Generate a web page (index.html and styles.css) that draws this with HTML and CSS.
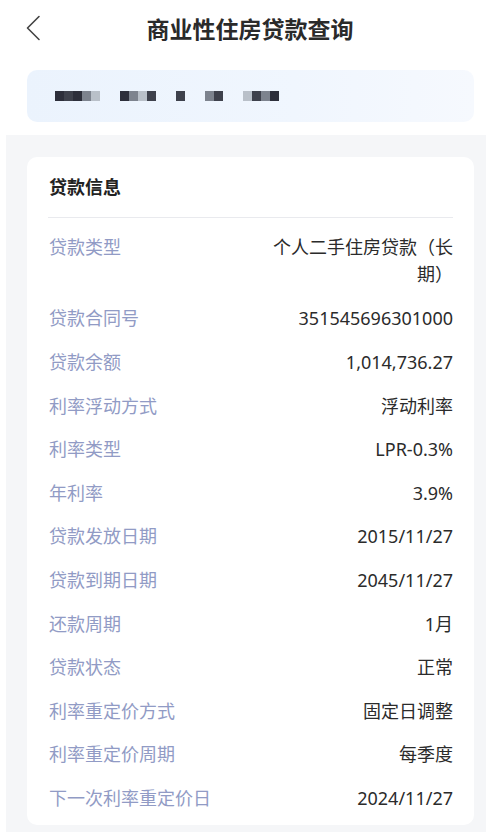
FILE: index.html
```html
<!DOCTYPE html>
<html lang="zh-CN">
<head>
  <meta charset="UTF-8" />
  <meta name="viewport" content="width=device-width, initial-scale=1" />
  <title>商业性住房贷款查询</title>
  <link rel="stylesheet" href="styles.css">
</head>
<body>
  <header class="nav">
    <span class="back">
      <svg width="16" height="26" viewBox="0 0 16 26"><path d="M14 1.5 L2.5 13 L14 24.5" fill="none" stroke="#444" stroke-width="1.6" stroke-linecap="round" stroke-linejoin="round"/></svg>
    </span>
    <h1 class="nav-title">商业性住房贷款查询</h1>
  </header>

  <div class="account">
    <span class="mosaic"><i class="m1"></i><i class="m0"></i><i class="m1"></i><i class="m2"></i><i class="m3"></i></span>
    <span class="mosaic"><i class="m1"></i><i class="m2"></i><i class="m3"></i><i class="m0"></i></span>
    <span class="mosaic"><i class="m0"></i></span>
    <span class="mosaic"><i class="m2"></i><i class="m0"></i></span>
    <span class="mosaic"><i class="m3"></i><i class="m0"></i><i class="m2"></i><i class="m1"></i></span>
  </div>

  <section class="panel">
    <div class="card">
      <h2 class="card-title">贷款信息</h2>
      <dl class="info">
        <div class="row"><dt>贷款类型</dt><dd class="wrap">个人二手住房贷款（长期）</dd></div>
        <div class="row"><dt>贷款合同号</dt><dd>351545696301000</dd></div>
        <div class="row"><dt>贷款余额</dt><dd>1,014,736.27</dd></div>
        <div class="row"><dt>利率浮动方式</dt><dd>浮动利率</dd></div>
        <div class="row"><dt>利率类型</dt><dd>LPR-0.3%</dd></div>
        <div class="row"><dt>年利率</dt><dd>3.9%</dd></div>
        <div class="row"><dt>贷款发放日期</dt><dd>2015/11/27</dd></div>
        <div class="row"><dt>贷款到期日期</dt><dd>2045/11/27</dd></div>
        <div class="row"><dt>还款周期</dt><dd>1月</dd></div>
        <div class="row"><dt>贷款状态</dt><dd>正常</dd></div>
        <div class="row"><dt>利率重定价方式</dt><dd>固定日调整</dd></div>
        <div class="row"><dt>利率重定价周期</dt><dd>每季度</dd></div>
        <div class="row"><dt>下一次利率重定价日</dt><dd>2024/11/27</dd></div>
      </dl>
    </div>
  </section>
</body>
</html>
```

FILE: styles.css
```css
body { margin: 0; background: #fff; color: #222; font-family: "Noto Sans", "Noto Sans CJK SC", sans-serif; }

.nav { height: 56px; display: flex; align-items: center; position: relative; }
.back { position: absolute; left: 25px; top: 15px; }
.nav-title { flex: 1; margin: 0; text-align: center; padding-left: 14px; font-size: 23px; font-weight: 700; color: #2a2a2a; }

.account { margin: 14px 12px 0 27px; height: 52px; border-radius: 10px; background: linear-gradient(90deg, #ebf3fd 0%, #f0f6fe 60%, #f6f9fe 100%); display: flex; align-items: center; padding-left: 28px; gap: 10px; }
.mosaic { display: flex; }
.mosaic + .mosaic { margin-left: 10px; }
.mosaic i { width: 9px; height: 10px; display: block; }
.mosaic .m0 { background: #3e414c; }
.mosaic .m1 { background: #2d2f3b; }
.mosaic .m2 { background: #7d838e; }
.mosaic .m3 { background: #b9c0c9; }

.panel { margin: 13px 0 0 6px; background: #f5f6f8; padding: 22px 12px 7px 21px; }
.card { background: #fff; border-radius: 10px; padding: 0 21px 5px; }
.card-title { margin: 0; padding: 17px 0 17px 1px; line-height: 26px; font-size: 18px; font-weight: 700; color: #222; border-bottom: 1px solid #e9eaee; }

.info { margin: 0; padding-top: 7px; }
.row { display: flex; justify-content: space-between; align-items: flex-start; padding: 8.8px 0; line-height: 26px; font-size: 18px; }
.row dt { color: #919bc5; white-space: nowrap; padding-left: 1px; }
.row dd { margin: 0; max-width: 186px; text-align: right; color: #2b2b2b; }
.row .wrap { line-height: 27px; }
```
